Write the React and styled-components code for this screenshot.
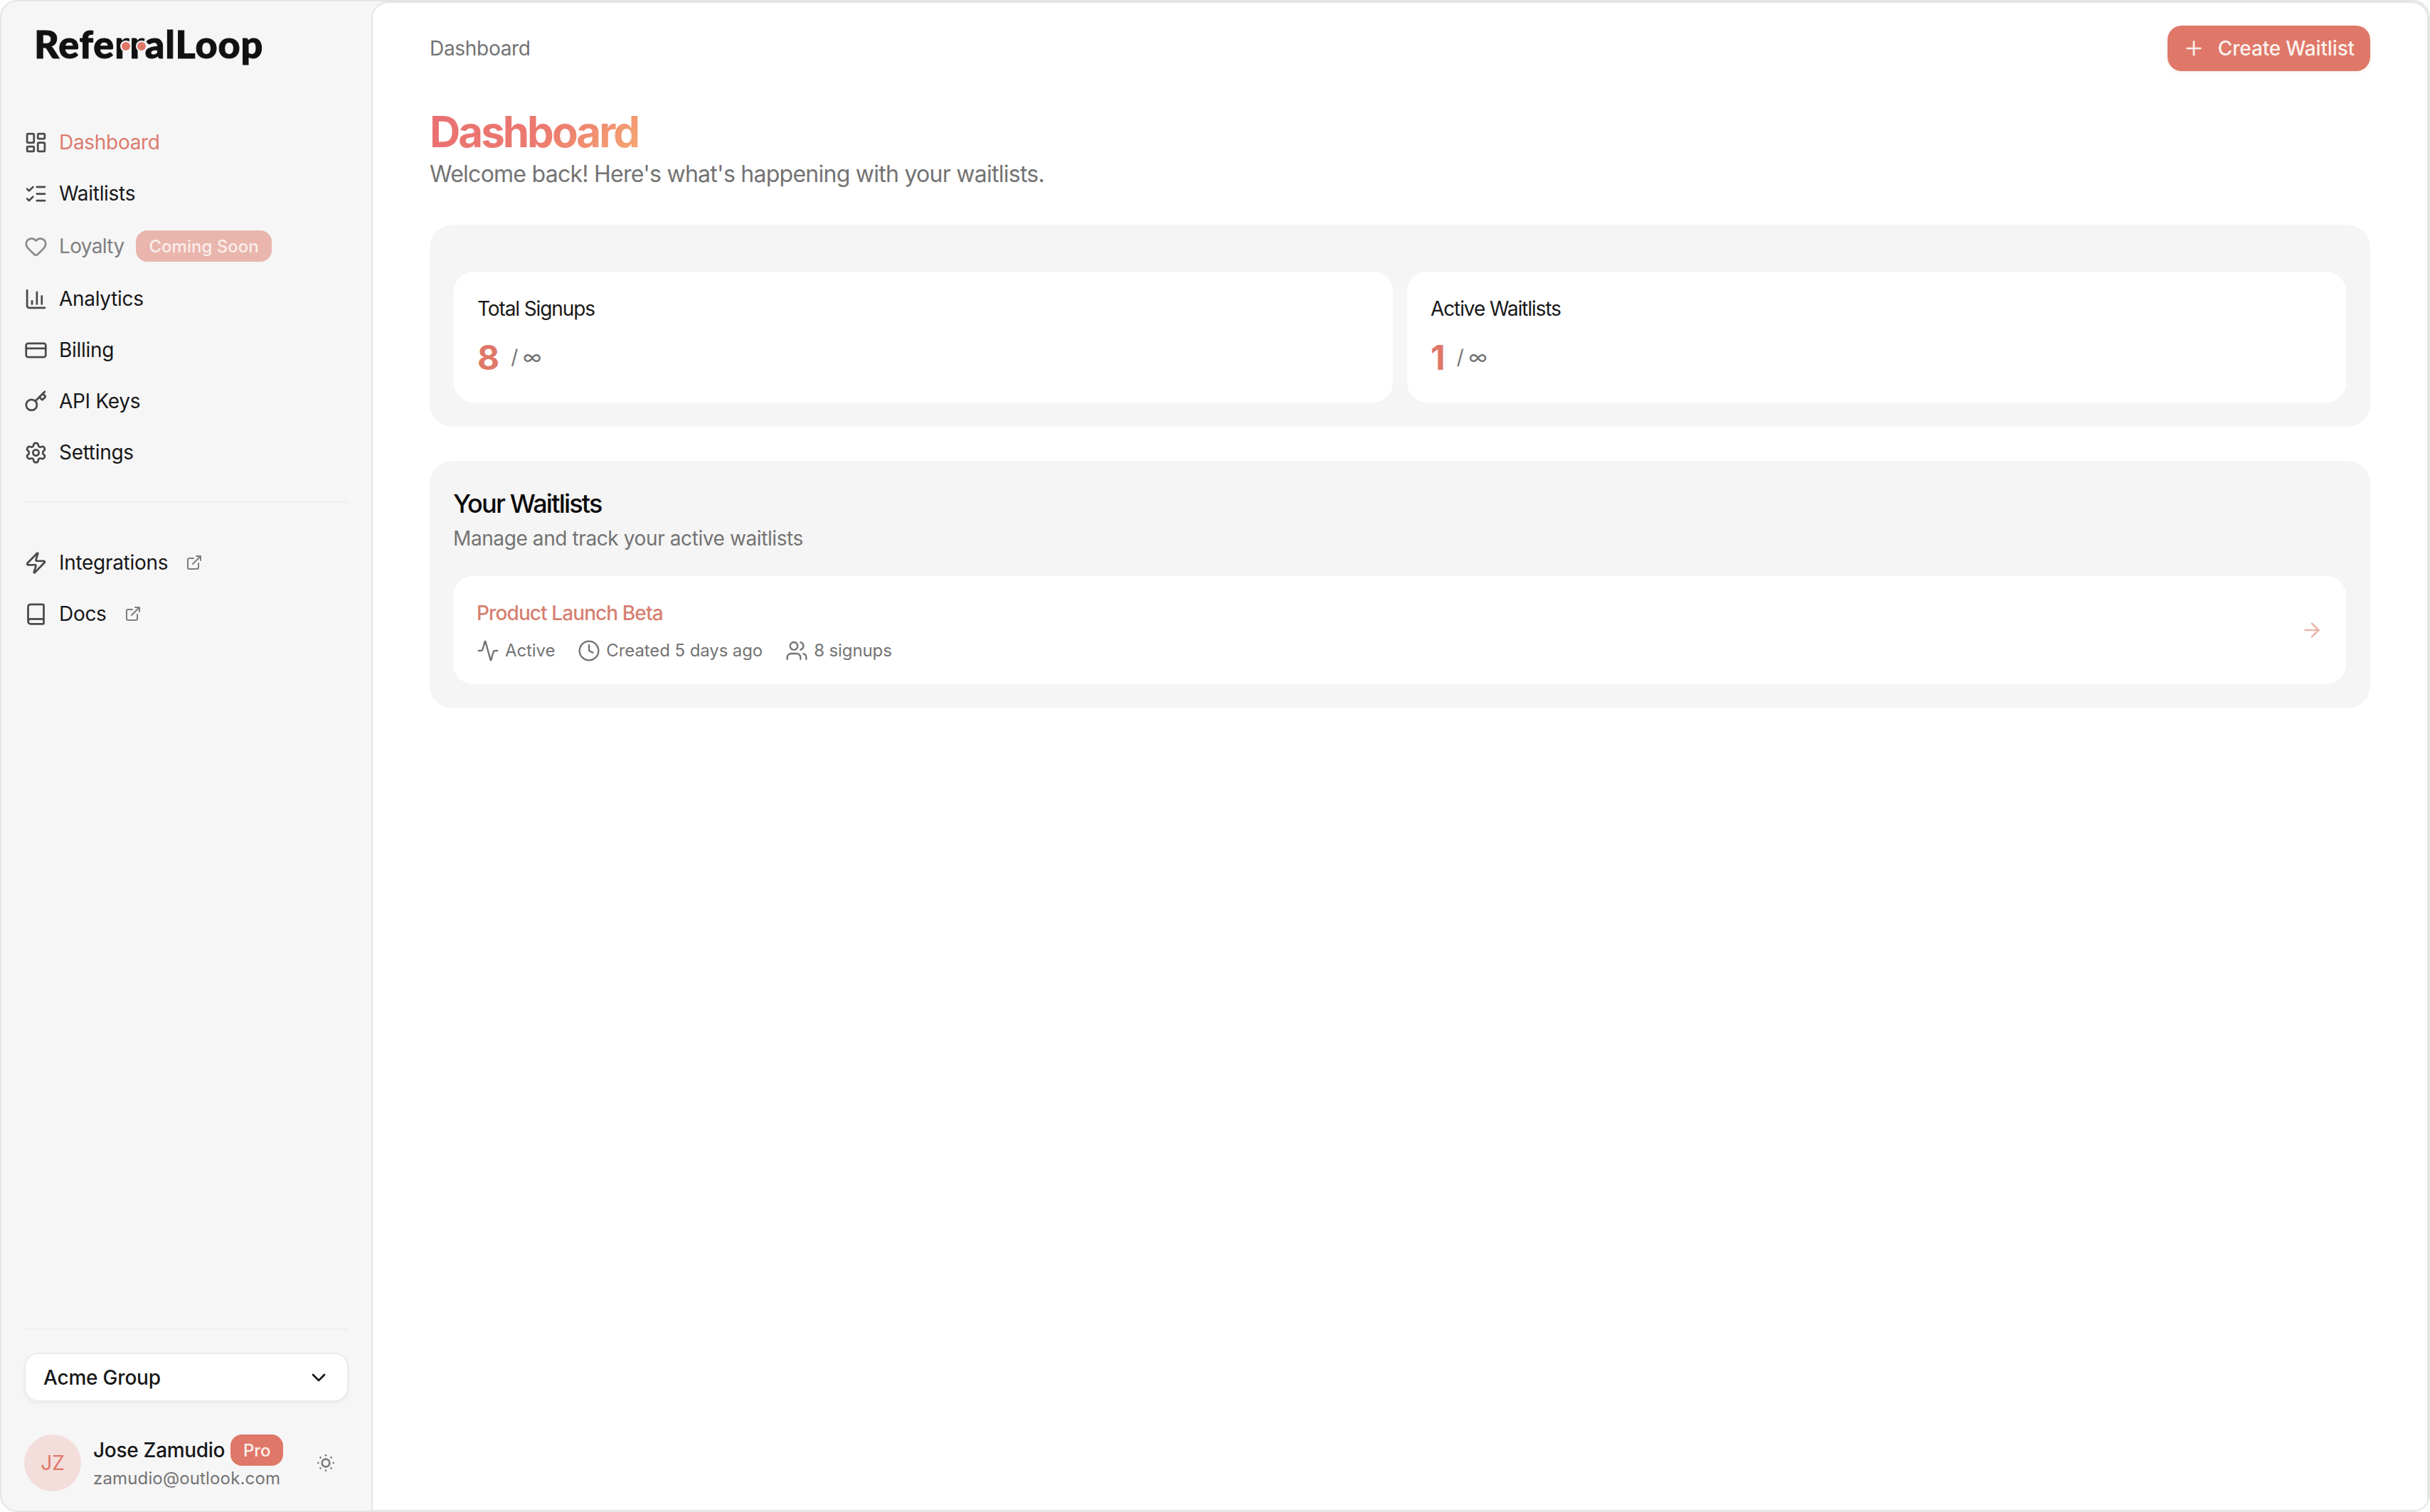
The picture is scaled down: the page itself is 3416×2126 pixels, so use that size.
import React from "react";
import styled, { createGlobalStyle } from "styled-components";
import {
  LayoutDashboard, ListChecks, Heart, ChartColumn, CreditCard, Key, Settings, Zap, Book,
  ExternalLink, Plus, Activity, Clock, Users, ArrowRight, ChevronDown, SunDim,
} from "lucide-react";

const coral = "#df7868";

const Global = createGlobalStyle`
  * { box-sizing: border-box; }
  html, body { margin: 0; padding: 0; background: #fff; }
  body { font-family: Inter, "Liberation Sans", sans-serif; color: #111; -webkit-font-smoothing: antialiased; }
`;

const Frame = styled.div`
  display: flex;
  width: 3416px;
  height: 2126px;
  background: #f6f6f7;
  border: 2px solid #e5e5e5;
  border-radius: 24px;
  overflow: hidden;
`;

const Sidebar = styled.aside`
  display: flex;
  flex-direction: column;
  flex: 0 0 520px;
  height: 100%;
`;

const Logo = styled.div`
  height: 162px;
  padding: 27px 0 0 46px;
  font-family: Lato, Inter, sans-serif;
  font-size: 54px;
  font-weight: 900;
  line-height: 66px;
  letter-spacing: 0.9px;
  color: #111;
  -webkit-text-stroke: 1px #111;
`;

const LogoR = styled.span`
  position: relative;
  &::after {
    content: "";
    position: absolute;
    top: 30px;
    right: -1px;
    width: 12px;
    height: 12px;
    border-radius: 50%;
    background: ${coral};
    box-shadow: 0 0 0 2px #f6f6f7;
  }
`;

const Nav = styled.nav`
  display: flex;
  flex-direction: column;
  padding-left: 32px;
`;

const NavRow = styled.div`
  display: flex;
  align-items: center;
  gap: 16px;
  height: ${(p) => (p.$tall ? 76 : 72)}px;
  font-size: 28px;
  letter-spacing: ${(p) => (p.$muted ? -0.65 : -0.3)}px;
  color: ${(p) => (p.$active ? "#dd7b6c" : p.$muted ? "#7f7f7f" : "#171717")};
  svg.lead { color: ${(p) => (p.$muted ? "#8a8a8a" : "#4a4a4a")}; flex: none; }
`;

const ExternalIcon = styled(ExternalLink)`
  margin-left: 9px;
  color: #7d7d7d;
`;

const SoonBadge = styled.span`
  display: flex;
  align-items: center;
  height: 44px;
  margin-left: 1px;
  padding: 0 18px;
  border-radius: 16px;
  background: #e9b5ad;
  color: #fbeeeb;
  font-size: 24px;
  font-weight: 500;
  letter-spacing: 0;
`;

const Rule = styled.hr`
  width: 456px;
  height: 2px;
  margin: ${(p) => p.$margin};
  border: 0;
  background: #eeeeef;
`;

const Bottom = styled.div`
  display: flex;
  flex-direction: column;
  margin-top: auto;
`;

const Select = styled.div`
  display: flex;
  align-items: center;
  justify-content: space-between;
  width: 456px;
  height: 69px;
  margin: 0 0 46px 32px;
  padding: 0 24px 0 25px;
  background: #fff;
  border: 2px solid #ececec;
  border-radius: 20px;
  box-shadow: 0 2px 4px rgba(0, 0, 0, 0.05);
  font-size: 28px;
  font-weight: 500;
  letter-spacing: -0.2px;
  color: #171717;
`;

const UserRow = styled.div`
  display: flex;
  align-items: center;
  height: 80px;
  margin: 0 0 27px 32px;
`;

const Avatar = styled.div`
  display: flex;
  align-items: center;
  justify-content: center;
  flex: none;
  width: 80px;
  height: 80px;
  border-radius: 50%;
  background: #f3dedb;
  color: ${coral};
  font-size: 28px;
`;

const UserText = styled.div`
  display: flex;
  flex-direction: column;
  width: 311px;
  margin-left: 17px;
`;

const NameLine = styled.div`
  display: flex;
  align-items: center;
  gap: 8px;
  height: 44px;
  font-size: 28px;
  font-weight: 500;
  letter-spacing: -0.3px;
  color: #171717;
`;

const ProBadge = styled.span`
  display: flex;
  align-items: center;
  justify-content: center;
  width: 74px;
  height: 44px;
  border-radius: 16px;
  background: ${coral};
  color: #fdf0ed;
  font-size: 24px;
  font-weight: 500;
  letter-spacing: 0;
`;

const Email = styled.div`
  height: 36px;
  font-size: 24px;
  line-height: 36px;
  letter-spacing: 0.15px;
  color: #737373;
`;

const ThemeIcon = styled(SunDim)`
  color: #7a7a7a;
`;

const Main = styled.main`
  flex: 1;
  min-width: 0;
  height: 100%;
  padding: 32px 80px 0 80px;
  background: #fff;
  border-style: solid;
  border-color: #e5e5e5;
  border-width: 2px 2px 1px 2px;
  border-radius: 24px 24px 0 0;
`;

const TopBar = styled.header`
  display: flex;
  align-items: center;
  justify-content: space-between;
  height: 64px;
`;

const Crumb = styled.div`
  font-size: 28px;
  letter-spacing: -0.3px;
  color: #737373;
`;

const CreateButton = styled.button`
  display: flex;
  align-items: center;
  gap: 18px;
  height: 64px;
  padding: 0 22px 0 21px;
  border: 0;
  border-radius: 20px;
  background: ${coral};
  color: #fdf1ee;
  font-family: inherit;
  font-size: 28px;
  font-weight: 500;
  letter-spacing: -0.15px;
  box-shadow: 0 2px 6px rgba(223, 120, 104, 0.12);
`;

const Title = styled.h1`
  width: fit-content;
  margin: 49px 0 0;
  font-size: 60px;
  line-height: 72px;
  font-weight: 700;
  letter-spacing: -3px;
  background: linear-gradient(135deg, #e96f72 0%, #ec7a6f 55%, #f6ab73 100%);
  -webkit-background-clip: text;
  background-clip: text;
  color: transparent;
`;

const Subtitle = styled.p`
  margin: 0;
  font-size: 32px;
  line-height: 48px;
  letter-spacing: -0.74px;
  color: #737373;
`;

const Panel = styled.section`
  margin-top: ${(p) => p.$top}px;
  padding: ${(p) => p.$pad};
  background: #f5f5f5;
  border-radius: 32px;
`;

const StatGrid = styled.div`
  display: grid;
  grid-template-columns: 1fr 1fr;
  gap: 20px;
`;

const Card = styled.div`
  background: #fff;
  border-radius: 28px;
`;

const StatCard = styled(Card)`
  height: 184px;
  padding: 32px 33px;
`;

const StatLabel = styled.div`
  font-size: 28px;
  line-height: 40px;
  letter-spacing: -1.1px;
  color: #171717;
`;

const StatValue = styled.div`
  display: flex;
  align-items: center;
  gap: 16px;
  height: 72px;
  margin-top: 12px;
`;

const Big = styled.span`
  font-size: 48px;
  font-weight: 700;
  color: ${coral};
`;

const Limit = styled.span`
  font-size: 28px;
  letter-spacing: -0.6px;
  color: #737373;
`;

const SectionTitle = styled.h2`
  margin: 0;
  font-size: 36px;
  line-height: 56px;
  font-weight: 500;
  letter-spacing: -1.8px;
  color: #0a0a0a;
`;

const SectionSub = styled.p`
  margin: 1px 0 33px;
  font-size: 28px;
  line-height: 40px;
  letter-spacing: -0.4px;
  color: #737373;
`;

const ListCard = styled(Card)`
  display: flex;
  align-items: center;
  justify-content: space-between;
  height: 152px;
  padding: 0 32px 0 33px;
`;

const ItemInfo = styled.div`
  padding-top: 4px;
`;

const ItemName = styled.div`
  font-size: 28px;
  line-height: 40px;
  font-weight: 500;
  letter-spacing: -0.9px;
  color: #d68071;
`;

const Meta = styled.div`
  display: flex;
  align-items: center;
  gap: 32px;
  margin-top: 13px;
`;

const MetaItem = styled.div`
  display: flex;
  align-items: center;
  gap: 8px;
  height: 40px;
  font-size: 24px;
  letter-spacing: -0.1px;
  color: #737373;
`;

const Arrow = styled(ArrowRight)`
  color: ${coral};
  opacity: 0.55;
`;

const navItems = [
  { label: "Dashboard", Icon: LayoutDashboard, active: true },
  { label: "Waitlists", Icon: ListChecks },
  { label: "Loyalty", Icon: Heart, muted: true, soon: true },
  { label: "Analytics", Icon: ChartColumn },
  { label: "Billing", Icon: CreditCard },
  { label: "API Keys", Icon: Key },
  { label: "Settings", Icon: Settings },
];

const linkItems = [
  { label: "Integrations", Icon: Zap },
  { label: "Docs", Icon: Book },
];

const stats = [
  { label: "Total Signups", value: "8" },
  { label: "Active Waitlists", value: "1" },
];

export default function App() {
  return (
    <>
      <Global />
      <Frame>
        <Sidebar>
          <Logo>
            Refe<LogoR>r</LogoR><LogoR>r</LogoR>alLoop
          </Logo>
          <Nav>
            {navItems.map(({ label, Icon, active, muted, soon }) => (
              <NavRow key={label} $active={active} $muted={muted} $tall={soon}>
                <Icon className="lead" size={33} />
                {label}
                {soon && <SoonBadge>Coming Soon</SoonBadge>}
              </NavRow>
            ))}
          </Nav>
          <Rule $margin="33px 0 48px 32px" />
          <Nav>
            {linkItems.map(({ label, Icon }) => (
              <NavRow key={label}>
                <Icon className="lead" size={33} />
                {label}
                <ExternalIcon size={24} />
              </NavRow>
            ))}
          </Nav>
          <Bottom>
            <Rule $margin="0 0 32px 32px" />
            <Select>
              Acme Group
              <ChevronDown size={32} color="#171717" />
            </Select>
            <UserRow>
              <Avatar>JZ</Avatar>
              <UserText>
                <NameLine>
                  Jose Zamudio
                  <ProBadge>Pro</ProBadge>
                </NameLine>
                <Email>zamudio@outlook.com</Email>
              </UserText>
              <ThemeIcon size={32} />
            </UserRow>
          </Bottom>
        </Sidebar>
        <Main>
          <TopBar>
            <Crumb>Dashboard</Crumb>
            <CreateButton>
              <Plus size={32} />
              Create Waitlist
            </CreateButton>
          </TopBar>
          <Title>Dashboard</Title>
          <Subtitle>Welcome back! Here's what's happening with your waitlists.</Subtitle>
          <Panel $top={47} $pad="66px 34px 34px">
            <StatGrid>
              {stats.map((s) => (
                <StatCard key={s.label}>
                  <StatLabel>{s.label}</StatLabel>
                  <StatValue>
                    <Big>{s.value}</Big>
                    <Limit>/ ∞</Limit>
                  </StatValue>
                </StatCard>
              ))}
            </StatGrid>
          </Panel>
          <Panel $top={48} $pad="32px 34px 34px 33px">
            <SectionTitle>Your Waitlists</SectionTitle>
            <SectionSub>Manage and track your active waitlists</SectionSub>
            <ListCard>
              <ItemInfo>
                <ItemName>Product Launch Beta</ItemName>
                <Meta>
                  <MetaItem><Activity size={32} strokeWidth={1.75} />Active</MetaItem>
                  <MetaItem><Clock size={32} strokeWidth={1.75} />Created 5 days ago</MetaItem>
                  <MetaItem><Users size={32} strokeWidth={1.75} />8 signups</MetaItem>
                </Meta>
              </ItemInfo>
              <Arrow size={32} />
            </ListCard>
          </Panel>
        </Main>
      </Frame>
    </>
  );
}
